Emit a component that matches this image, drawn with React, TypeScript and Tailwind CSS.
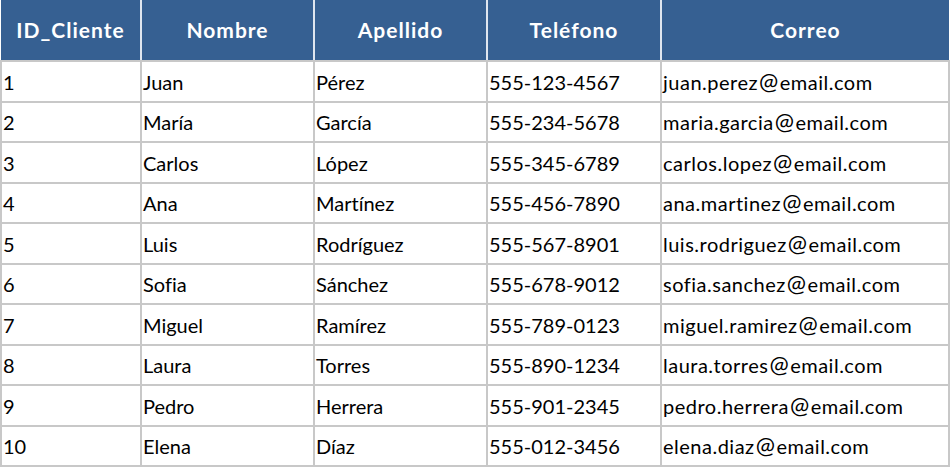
import React from "react";

const rows = [
  ["1", "Juan", "Pérez", "555-123-4567", "juan.perez@email.com"],
  ["2", "María", "García", "555-234-5678", "maria.garcia@email.com"],
  ["3", "Carlos", "López", "555-345-6789", "carlos.lopez@email.com"],
  ["4", "Ana", "Martínez", "555-456-7890", "ana.martinez@email.com"],
  ["5", "Luis", "Rodríguez", "555-567-8901", "luis.rodriguez@email.com"],
  ["6", "Sofia", "Sánchez", "555-678-9012", "sofia.sanchez@email.com"],
  ["7", "Miguel", "Ramírez", "555-789-0123", "miguel.ramirez@email.com"],
  ["8", "Laura", "Torres", "555-890-1234", "laura.torres@email.com"],
  ["9", "Pedro", "Herrera", "555-901-2345", "pedro.herrera@email.com"],
  ["10", "Elena", "Díaz", "555-012-3456", "elena.diaz@email.com"],
];

const headers = ["ID_Cliente", "Nombre", "Apellido", "Teléfono", "Correo"];
const widths = ["w-[140px]", "w-[173px]", "w-[173px]", "w-[174px]", "w-[288px]"];

function Cell({ text }: { text: string }) {
  const i = text.indexOf("@");
  if (i < 0) return <>{text}</>;
  return (
    <span className="tracking-[0.5px]">
      {text.slice(0, i)}
      <span className="mx-[1px] text-[23px] leading-[0]">@</span>
      {text.slice(i + 1)}
    </span>
  );
}

export default function App() {
  return (
    <div
      className="w-[950px] h-[469px] bg-white"
      style={{ fontFamily: "Lato, 'Open Sans', sans-serif", fontVariantLigatures: "none" }}
    >
      <table className="table-fixed border-collapse w-[949px]">
        <colgroup>
          {widths.map((w, i) => (
            <col key={i} className={w} />
          ))}
        </colgroup>
        <thead>
          <tr className="h-[61px]">
            {headers.map((h, i) => (
              <th
                key={i}
                className="bg-[#366092] text-white font-bold text-[21px] tracking-[1px] text-center border-x-2 border-x-[#dfe6f0] border-b-2 border-b-[#c8c8c8] border-t-0 first:border-l-0 last:border-r-0 p-0"
              >
                {h}
              </th>
            ))}
          </tr>
        </thead>
        <tbody>
          {rows.map((r, ri) => (
            <tr key={ri} className="h-[40.5px]">
              {r.map((c, ci) => (
                <td
                  key={ci}
                  className="border-2 border-[#c8c8c8] text-[20px] text-black pl-[1px] pr-0 pt-[1px] pb-0 align-middle whitespace-nowrap"
                >
                  <Cell text={c} />
                </td>
              ))}
            </tr>
          ))}
        </tbody>
      </table>
    </div>
  );
}
